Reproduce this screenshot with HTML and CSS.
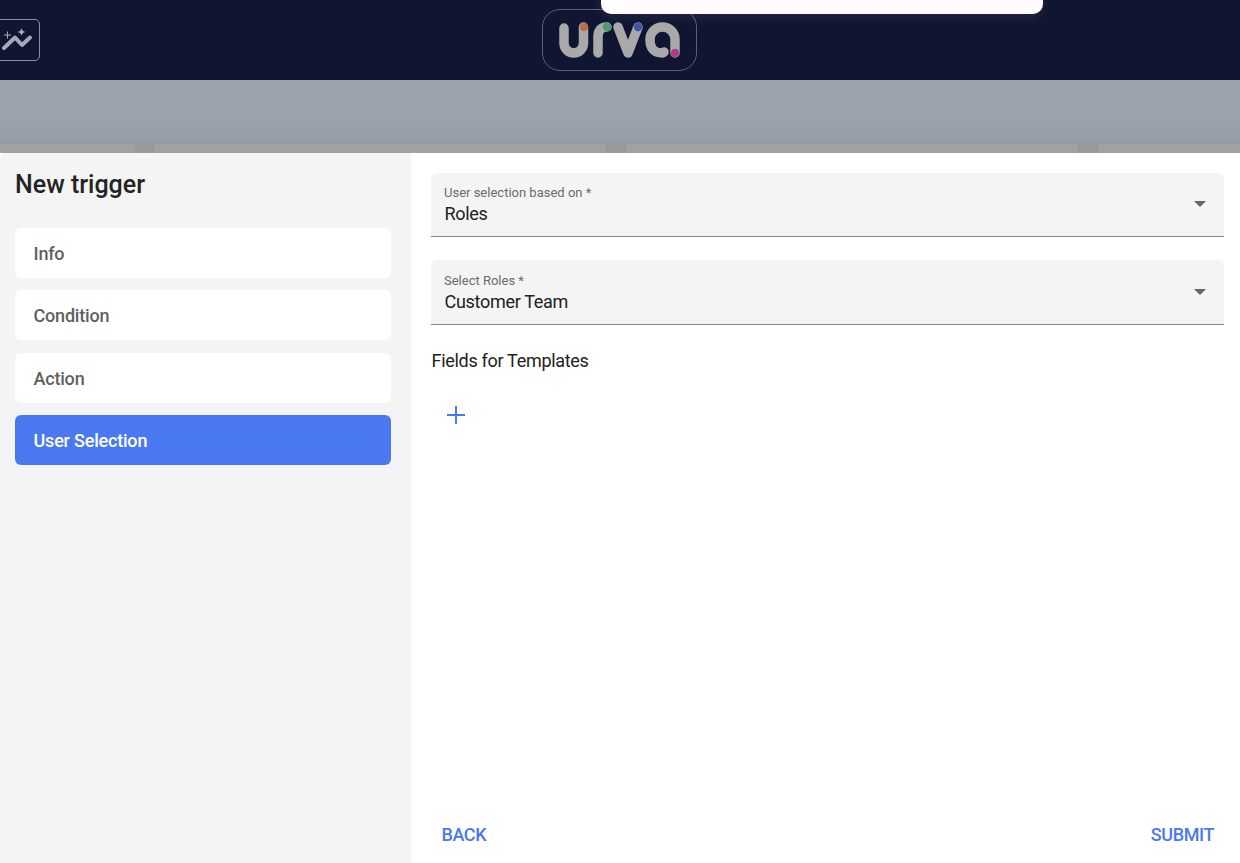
FILE: index.html
```html
<!DOCTYPE html>
<html lang="en">
<head>
<meta charset="utf-8">
<title>New trigger</title>
<link rel="stylesheet" href="styles.css">
</head>
<body>
<header class="topbar">
  <button class="insight-btn" aria-label="Insights">
    <svg class="insight-icon" viewBox="0 0 32 24" width="32" height="24">
      <path class="ins-line" d="M2 20 L13 9.500 L20 17 L28 9.500"/>
      <path class="ins-star" d="M19.500 0 Q20 3.500 23.500 4 Q20 4.500 19.500 8 Q19 4.500 15.500 4 Q19 3.500 19.500 0Z"/>
      <path class="ins-plus" d="M5.500 3.500V10.500M2 7H9"/>
    </svg>
  </button>
  <div class="logo">
    <svg class="logo-mark" viewBox="0 0 156 62" width="156" height="62">
      <path class="lm" d="M22 19 V34 A9.750 10 0 0 0 41.500 34 V18"/>
      <path class="lm" d="M56 44 V28 Q56 18 65 18"/>
      <path class="lm" d="M76 18 L86 44 L96 18"/>
      <path class="lm" d="M133 44 V30.500 A12.500 12.500 0 0 0 108 30.500 Q108 44 120.500 44 L122 43"/>
      <circle class="dot-a" cx="42" cy="18" r="4.200"/>
      <circle class="dot-b" cx="65" cy="18" r="4.200"/>
      <circle class="dot-c" cx="96" cy="18" r="4.200"/>
      <circle class="dot-d" cx="133" cy="44" r="4.200"/>
    </svg>
  </div>
  <div class="toast"></div>
</header>

<div class="backdrop">
  <div class="card-strip">
    <span class="strip-card strip-a"></span>
    <span class="strip-card strip-b"></span>
    <span class="strip-card strip-b"></span>
    <span class="strip-card strip-c"></span>
  </div>
</div>

<main class="sheet">
  <aside class="side">
    <h1 class="side-title">New trigger</h1>
    <nav class="steps">
      <div class="step">Info</div>
      <div class="step">Condition</div>
      <div class="step">Action</div>
      <div class="step step-active">User Selection</div>
    </nav>
  </aside>
  <section class="content">
    <div class="form">
      <div class="field">
        <div class="field-text">
          <span class="field-label">User selection based on *</span>
          <span class="field-value">Roles</span>
        </div>
        <span class="caret"></span>
      </div>
      <div class="field">
        <div class="field-text">
          <span class="field-label">Select Roles *</span>
          <span class="field-value">Customer Team</span>
        </div>
        <span class="caret"></span>
      </div>
      <h2 class="fields-title">Fields for Templates</h2>
      <button class="add-btn" aria-label="Add">
        <svg viewBox="0 0 20 20" width="20" height="20"><path d="M10 1V19M1 10H19"/></svg>
      </button>
    </div>
    <footer class="actions">
      <button class="text-btn">BACK</button>
      <button class="text-btn">SUBMIT</button>
    </footer>
  </section>
</main>
</body>
</html>
```
FILE: styles.css
```css
* { box-sizing: border-box; }
html, body { margin: 0; height: 100%; }
body {
  width: 1240px;
  height: 863px;
  overflow: hidden;
  font-family: Roboto, "Liberation Sans", sans-serif;
  background: #fff;
  display: flex;
  flex-direction: column;
}
button { font-family: inherit; border: 0; background: none; padding: 0; cursor: pointer; }

.topbar {
  height: 80px;
  flex: none;
  background: #101632;
  position: relative;
  display: flex;
  justify-content: center;
  align-items: flex-start;
  padding-top: 9px;
}
.insight-btn {
  position: absolute;
  left: -10px;
  top: 19px;
  width: 50px;
  height: 42px;
  border: 1px solid #8b8f9f;
  border-radius: 5px;
  display: flex;
  align-items: center;
  justify-content: flex-end;
  padding-right: 5px;
}
.insight-icon { display: block; }
.ins-line { fill: none; stroke: #a3a9bb; stroke-width: 4; stroke-linecap: round; stroke-linejoin: round; }
.ins-star { fill: #a6b2c8; }
.ins-plus { fill: none; stroke: #a6adc0; stroke-width: 1; }
.logo {
  width: 155px;
  height: 62px;
  margin-left: -1px;
  border: 1px solid #5f6271;
  border-radius: 18px;
}
.logo-mark { display: block; margin: -1px; }
.lm { fill: none; stroke: #a9a9a9; stroke-width: 9.500; stroke-linecap: round; stroke-linejoin: round; }
.dot-a { fill: #bd6b48; }
.dot-b { fill: #479a6d; }
.dot-c { fill: #3e55ac; }
.dot-d { fill: #ad3b80; }
.toast {
  position: absolute;
  left: 601px;
  top: -20px;
  width: 442px;
  height: 34px;
  background: #fffbff;
  border-radius: 10px;
  box-shadow: 0 4px 12px rgba(255, 255, 255, .07);
}

.backdrop {
  height: 73px;
  flex: none;
  background: linear-gradient(#9ca2ae 0, #9ca2ae 50%, #9398a5 100%);
  display: flex;
  align-items: flex-end;
}
.card-strip {
  width: 100%;
  height: 10px;
  background: #9a9a9a;
  border-top: 1px solid #979797;
  display: flex;
  justify-content: space-between;
}
.strip-card { display: block; height: 100%; background: #a1a1a1; }
.strip-a { width: 135px; }
.strip-b { width: 454px; border-left: 1px solid #959595; border-right: 1px solid #959595; }
.strip-c { width: 143px; border-left: 1px solid #959595; }

.sheet {
  flex: 1;
  min-height: 0;
  display: flex;
  background: #fff;
  border-radius: 6px 6px 0 0;
  overflow: hidden;
}
.side {
  width: 411px;
  flex: none;
  background: #f4f4f4;
  padding: 17px 20px 0 15px;
}
.side-title {
  margin: 0;
  font-size: 25px;
  font-weight: 500;
  line-height: 30px;
  color: #242424;
}
.steps {
  display: flex;
  flex-direction: column;
  gap: 12.500px;
  margin-top: 27.900px;
}
.step {
  height: 50px;
  background: #fff;
  border-radius: 6px;
  padding-left: 18.500px;
  padding-top: .6px;
  display: flex;
  align-items: center;
  font-size: 18px;
  font-weight: 500;
  letter-spacing: -0.200px;
  color: #5f5f5f;
}
.step-active { background: #4a78f0; color: #fff; }

.content {
  flex: 1;
  min-width: 0;
  padding: 20px 16px 0 20px;
  display: flex;
  flex-direction: column;
  justify-content: space-between;
}
.form { display: flex; flex-direction: column; }
.field {
  height: 64.330px;
  background: #f4f4f4;
  border-bottom: 1px solid #8a8a8a;
  border-radius: 6px 6px 0 0;
  display: flex;
  align-items: center;
  justify-content: space-between;
  padding: 0 18px 0 13px;
  margin-bottom: 23.150px;
}
.field-text { display: flex; flex-direction: column; }
.field-label { font-size: 13px; line-height: 15px; color: #6b6b6b; margin: 3px 0 1px; }
.field-value { font-size: 18px; line-height: 26px; letter-spacing: -0.300px; margin-left: .5px; color: #212121; }
.caret {
  width: 0;
  height: 0;
  border-left: 6px solid transparent;
  border-right: 6px solid transparent;
  border-top: 6px solid #666;
  margin-bottom: 1px;
}
.fields-title {
  margin: 0 0 0 .5px;
  font-size: 18px;
  font-weight: 400;
  line-height: 26px;
  letter-spacing: -0.300px;
  color: #212121;
}
.add-btn { width: 50px; height: 50px; margin-top: 16px; display: flex; align-items: center; justify-content: center; }
.add-btn path { stroke: #4a78f0; stroke-width: 2; fill: none; }
.actions {
  height: 41px;
  flex: none;
  display: flex;
  justify-content: space-between;
  align-items: flex-start;
  padding: 0 10px 0 10.500px;
}
.text-btn {
  font-size: 18px;
  font-weight: 500;
  line-height: 26px;
  letter-spacing: -0.400px;
  color: #4a78f0;
}
```
